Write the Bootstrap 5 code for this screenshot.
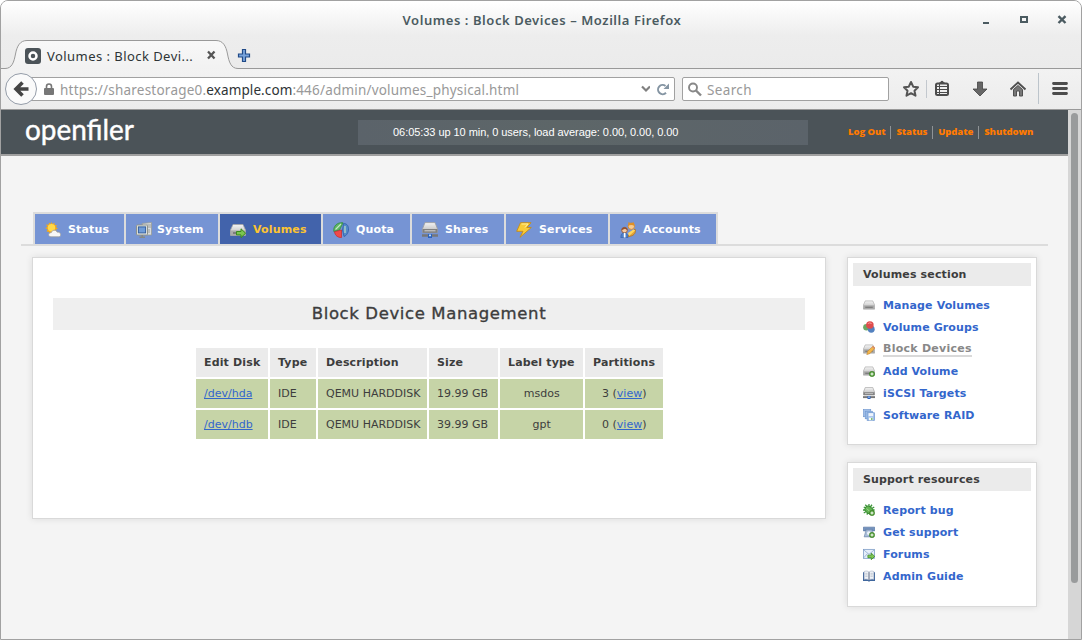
<!DOCTYPE html>
<html lang="en">
<head>
<meta charset="utf-8">
<title>Volumes : Block Devices</title>
<link rel="stylesheet" href="https://cdn.jsdelivr.net/npm/bootstrap@5.3.0/dist/css/bootstrap.min.css">
<style>
body{font:11px/16px "DejaVu Sans",sans-serif;color:#3d3d3d;background:#fff;overflow:hidden}
svg{display:block;flex:none}
.win{width:1082px;height:640px;border:1px solid #a1a1a1;border-radius:8px 8px 0 0;overflow:hidden;background:#f4f4f4}
.chrome-font{font-family:"Noto Sans","Open Sans",sans-serif}
.topbars{height:68px;background:linear-gradient(#fff,#ededed 35px,#ebebeb)}
.titlebar{height:38px}
.titlebar .caption{font-size:13px;font-weight:600;color:#4b5b61;letter-spacing:.56px;padding-left:2px}
.winbtns{right:14px;top:13px;gap:27px}
.tabstrip{height:30px}
.tabstrip .tabshape{left:0;top:0}
.tabtitle{font-size:13px;color:#2e3436;letter-spacing:.45px;width:164px;padding-left:6px}
.toolbar{height:41px;background:linear-gradient(#f2f2f2,#ececec);border-bottom:1px solid #999}
.field{height:24px;background:#fff;border:1px solid #a1a1a1;border-radius:2px;font-size:13.5px;color:#999}
.urlfield{width:655px;margin-left:19px}
.urlfield .lock{margin-left:23px;margin-right:6px}
.urltext{line-height:22px;padding-top:1px}
.searchfield{width:207px;margin-left:7px}
.searchtext{letter-spacing:.35px;margin-left:5px;padding-top:1px}
.host{color:#2e3436}
.u1{letter-spacing:.22px}.u2{letter-spacing:.1px}.u3{letter-spacing:.19px}
.backbtn{left:4px;top:4px}
.pagebody{width:1067px}
.apphead{height:46px;background:#4b5358;border-bottom:2px solid #a0a0a0}
.brandbox{width:357px;padding-left:23px}
.uptime{width:450px;height:25px;background:linear-gradient(90deg,#5b636a,#5d6668 45%,#5b636a);color:#fff;font:11px/25px "Liberation Sans",sans-serif;letter-spacing:-.055px;padding-left:35px}
.toplinks{margin-left:40px;font:800 9.5px/12px "Open Sans","Noto Sans",sans-serif}
.toplinks a{color:#ff7a00;text-decoration:none;letter-spacing:-.1px}
.toplinks i{width:1px;height:13px;background:#8e9396;margin:0 5px}
.menu{margin:56px 20px 0;height:34px;padding-left:12px;border-bottom:2px solid #dcdcdc}
.menu .tabs{border:2px solid #dcdcdc;border-bottom:0;height:32px;gap:2px;background:#dcdcdc}
.menu a{background:#7694d4;color:#fff;font-weight:700;text-decoration:none;padding:2px 0 0 10px;gap:7px;letter-spacing:.15px}
.menu a.on{background:#4263ab;color:#fdc431}
.menu a.near{gap:5px;letter-spacing:.15px}
.w1{width:89px}.w2{width:92px}.w3{width:101px}.w4{width:87px}.w5{width:102px}.w6{width:106px}
.panelbox{background:#fff;border:1px solid #d9d9d9;box-shadow:0 0 7px rgba(0,0,0,.1)}
.content{margin:11px 0 0 31px;gap:21px}
.mainpanel{width:794px;height:262px;padding:40px 20px 0}
.ptitle{height:32px;background:#efefef;font-size:16.5px;line-height:32px;letter-spacing:.62px;-webkit-text-stroke:.35px #3d3d3d;margin-bottom:16px}
.disks{border-collapse:separate;border-spacing:2px;table-layout:fixed;width:471px}
.disks th,.disks td{height:29px;padding:0 7px 0 8.5px;line-height:28px;white-space:nowrap}
.disks th{background:#ebebeb;letter-spacing:.15px}
.disks td{background:#c6d4a7}
.disks a{color:#36c}
.c1{width:72px}.c2{width:46px}.c3{width:109px}.c4{width:69px}.c5{width:83px}.c6{width:78px}
.side{width:190px;padding:5px}
.side-a{height:188px;margin-bottom:17px}
.side-b{height:145px}
.sidehead{height:23px;background:#ebebeb;line-height:24px;padding-left:10px;font-weight:700;letter-spacing:.15px;margin-bottom:8px}
.side li{height:22px;padding-left:10px;gap:8px}
.side a{color:#36c;font-weight:700;text-decoration:none;letter-spacing:.12px;padding-top:2px}
.side a.cur{color:#888;border-bottom:2px solid #d9d9d9;line-height:12px;letter-spacing:.25px}
.scroller{width:13px;background:#d6d6d6;padding:3px 3px 0}
.thumb{width:7px;height:470px;border-radius:4px;background:#999b9c}
</style>
<script src="https://cdn.jsdelivr.net/npm/bootstrap@5.3.0/dist/js/bootstrap.bundle.min.js"></script>
</head>
<body>
<svg width="0" height="0" class="position-absolute">
<defs>
<linearGradient id="gTab" x2="0" y2="1"><stop stop-color="#f8f8f8"/><stop offset="1" stop-color="#f1f1f1"/></linearGradient>
<linearGradient id="gDisk" x2="0" y2="1"><stop stop-color="#f4f4f4"/><stop offset="1" stop-color="#b4b4b4"/></linearGradient>
</defs>
<symbol id="disk" viewBox="0 0 16 16"><path d="M3 2.500h10l2.500 5.500v5.500H.5V8z" fill="url(#gDisk)" stroke="#a4a4a4" stroke-width=".8"/><path d="M.8 8.500h14.400v4.800H.8z" fill="#aaa"/><path d="M3 11h10" stroke="#6f6f6f" stroke-width="1.300"/></symbol>
<symbol id="plus" viewBox="0 0 16 16"><circle cx="12" cy="12" r="3.600" fill="#4f9b35" stroke="#36761f" stroke-width=".6"/><path d="M12 10v4M10 12h4" stroke="#fff" stroke-width="1.300"/></symbol>
<symbol id="arrow" viewBox="0 0 16 16"><path d="M6.500 9.500h4.500V6.800l4.600 4.400-4.600 4.400v-2.700H6.500z" fill="#7cc552" stroke="#3a8a1d" stroke-width="1"/></symbol>
<symbol id="net" viewBox="0 0 16 16"><path d="M3 .6h10l2.400 6v4H.6v-4z" fill="url(#gDisk)" stroke="#9a9a9a" stroke-width=".8"/><path d="M.7 7h14.600v3.800H.7z" fill="#808080"/><path d="M2.500 8.800h11" stroke="#ddd" stroke-width=".9"/><path d="M0 13.500h16" stroke="#777" stroke-width="2.600"/><path d="M6 12h4v4H6z" fill="#2c63bd"/><path d="M7 12.500h2v1.700H7z" fill="#bcd5f5"/></symbol>
<symbol id="weather" viewBox="0 0 16 16"><path d="M6.500 0l1 2 2-1.300.2 2.400 2.400.2L10.800 5l2 1.500-2 1.200 1 2-2.500.4-.8 2-2-1.300-2 1.300-.5-2.200-2.500-.5 1-2L.2 6l2.300-1.100L1 2.600l2.500.1L4 .5l1.800 1.400z" fill="#f3a81c"/><circle cx="6.500" cy="5.800" r="3.700" fill="#ffd84a"/><path d="M6 14.800c-3.500-.2-3-4.300.3-4.200C7 7.800 11 7.300 12 10.100c2.500-.2 3.700 1.200 3.700 2.600 0 1.600-1 2.100-2.400 2.100z" fill="#f7f7f7" stroke="#9d9d9d" stroke-width=".8"/></symbol>
<symbol id="pc" viewBox="0 0 16 16"><path d="M6 1.500L15.500.5v12.500H10z" fill="#d9dcdc" stroke="#989c98" stroke-width=".8"/><path d="M10.500 3H15M10.500 5H15M13 7v4" stroke="#8b9190" stroke-width=".8"/><rect x=".5" y="3" width="11" height="10" rx="1" fill="#e6e8e4" stroke="#8e938c"/><rect x="2.400" y="4.900" width="7.200" height="6" fill="#6f9cd8" stroke="#355f9e" stroke-width="1"/><path d="M3.500 15.200h5.500M6.200 13v2" stroke="#858985" stroke-width="1.600"/></symbol>
<symbol id="pie" viewBox="0 0 16 16"><path d="M10.500 1.500C14.500 1.500 15.700 4.500 15.500 8c-.2 3-2.500 6-4.500 6.500L9.500 8z" fill="#5388ca" stroke="#2d60a8" stroke-width=".8"/><path d="M10 .8L6.500 8 .8 9.500C0 4.500 4 0 10 .8z" fill="#5fb564" stroke="#2f8f3e" stroke-width=".8"/><path d="M1.500 9.700l7-1.700v7.500C5 15.700 2 13.500 1.500 9.700z" fill="#f04a4a" stroke="#c92828" stroke-width=".7"/><path d="M2.500 7.500L8 2M12 4v7" stroke="#c5e8c9" stroke-width="1.100"/></symbol>
<symbol id="bolt" viewBox="0 0 16 16"><path d="M4.500.7H15L10.800 5.500h4.500L4 15.300l3-6H.7z" fill="#f9cb38" stroke="#c78c15" stroke-width=".9"/><path d="M5.500 2H12L9 5.500" fill="none" stroke="#fff0a0"/></symbol>
<symbol id="users" viewBox="0 0 16 16"><path d="M7 15L15 7c1.500 3-1 6.500-4 7z" fill="#e3a33c" stroke="#b67518" stroke-width=".8"/><circle cx="11.300" cy="4.200" r="3.200" fill="#f6cb92" stroke="#d1822b" stroke-width=".8"/><path d="M8 4L8.500 0l2.300 1.300L13.800.2 14.700 4C12.500 2.600 10 2.600 8 4z" fill="#dd8f28"/><path d="M8 11l5.500-3.500 1.700 1L9 14z" fill="#ffd65b"/><circle cx="4.500" cy="8.200" r="2.800" fill="#f4c79d" stroke="#8e4c2b" stroke-width=".8"/><path d="M1.500 8.200c0-4 6-4 6.100 0L5 6.800z" fill="#94502e"/><path d="M.8 15.700c0-4 1.500-4.700 3.700-4.700s3.500 1.200 3.500 4.700z" fill="#4d7fca" stroke="#2c5a9f" stroke-width=".5"/><path d="M3.800 11h1.700v4.500H3.800z" fill="#fff"/></symbol>
<symbol id="balls" viewBox="0 0 16 16"><circle cx="4.600" cy="8.300" r="4.400" fill="#6ba765"/><circle cx="11" cy="11" r="4.600" fill="#5381bf"/><circle cx="9.200" cy="5.200" r="5" fill="#df4c4c"/><path d="M6.500 4c1-2 4-2 5 0" fill="none" stroke="#f5a0a0" stroke-width="1.300"/></symbol>
<symbol id="pencil" viewBox="0 0 16 16"><path d="M5 15.500l1.200-4.500L13.500 4 16.200 6.700l-7.200 7.500z" fill="#f3b64a" stroke="#b0762b" stroke-width=".6"/><path d="M13.500 4L16 6.500l-1.500 1.300L12 5.300z" fill="#d98a70"/></symbol>
<symbol id="raid" viewBox="0 0 16 16"><g fill="#a3c1ea" stroke="#6f97cf" stroke-width=".9"><rect x=".8" y=".8" width="9.500" height="9.500"/><rect x="3" y="3" width="9.500" height="10"/><rect x="5.500" y="5" width="10" height="10.300"/></g><path d="M7.500 5.500h6v4h-6z" fill="#eef4fc"/><path d="M8 11.500h5V15H8z" fill="#f8fbf1"/><path d="M11 12h1.500v2.500H11z" fill="#58a84a"/></symbol>
<symbol id="bug" viewBox="0 0 16 16"><path d="M1 4l4 2M3 1l4 4M8 0v5M12 1L9 5M15 4l-5 3M0 8h6M1 12l5-3M15.500 8H9M5 14l3-4" stroke="#3e963b" stroke-width="1.700"/><ellipse cx="8" cy="8" rx="6" ry="4.600" transform="rotate(40 8 8)" fill="#62b452" stroke="#31812d"/><path d="M5 6l5 5" stroke="#bce4a4"/></symbol>
<symbol id="phone" viewBox="0 0 16 16"><path d="M.5 1.500h15v5h-3v-2h-9v2h-3z" fill="#7594bf" stroke="#48699a" stroke-width=".8"/><path d="M4 5.500h8l2.500 9H1.500z" fill="#a9bdd7" stroke="#6480a6" stroke-width=".8"/><circle cx="8" cy="9.500" r="2.600" fill="#edf3fa"/></symbol>
<symbol id="mail" viewBox="0 0 16 16"><rect x=".6" y="1.800" width="14.800" height="12" fill="#e5eefa" stroke="#7899c4"/><path d="M1 2.500l7 6 7-6M1 13l5-5.500M15 13l-5-5.500" fill="none" stroke="#8aa7cd"/></symbol>
<symbol id="book" viewBox="0 0 16 16"><path d="M0 3h16v11.500H9.500L8 15.500l-1.500-1H0z" fill="#3f669d"/><path d="M1.500 2C4 1 6.500 1.200 8 2.700v10.500C6 12 4 12 1.500 12.500zM14.500 2C12 1 9.500 1.200 8 2.700v10.500c2-1.200 4-1.200 6.500-.7z" fill="#f0f3f8" stroke="#8f9bb0" stroke-width=".6"/><path d="M3 4.500h3M3 6.500h3M3 8.500h3M10 4.500h3M10 6.500h3M10 8.500h3" stroke="#a9b1bd" stroke-width=".8"/><path d="M8 3v10" stroke="#6c7788"/></symbol>
</svg>

<div class="win d-flex flex-column">
  <header class="topbars chrome-font flex-shrink-0">
    <div class="titlebar position-relative d-flex align-items-center justify-content-center">
      <span class="caption">Volumes : Block Devices – Mozilla Firefox</span>
      <div class="winbtns position-absolute d-flex">
        <svg width="11" height="12"><path d="M3 9h6" stroke="#4b5b61" stroke-width="2"/></svg>
        <svg width="11" height="12"><path d="M3 3h6v5H3z" fill="none" stroke="#4b5b61" stroke-width="2"/></svg>
        <svg width="11" height="12"><path d="M2.500 2.200l7 6.800M9.500 2.200L2.500 9" stroke="#4b5b61" stroke-width="2.400"/></svg>
      </div>
    </div>
    <div class="tabstrip position-relative">
      <svg class="tabshape position-absolute" width="1080" height="30"><path d="M-1 29.500H4C11 29.500 13 23 14.500 15 16 7 19 1.500 26 1.500H215c7 0 10 5.500 11.500 13.500S230 29.500 237 29.500H1082V32H-1z" fill="url(#gTab)" stroke="#999"/></svg>
      <div class="position-relative d-flex align-items-center h-100 ps-4 pt-1">
        <svg width="16" height="16"><rect width="16" height="16" rx="3" fill="#4b5358"/><circle cx="8" cy="8" r="3.500" fill="none" stroke="#fff" stroke-width="2.500"/></svg>
        <span class="tabtitle text-nowrap">Volumes : Block Devi...</span>
        <svg width="12" height="12"><path d="M3 1.500l6.500 7M9.500 1.500L3 8.500" stroke="#555" stroke-width="2.300"/></svg>
        <svg class="ms-3 ps-1" width="18" height="14"><path d="M5.500 .5h3V5h4v3h-4v4.500h-3V8h-4V5h4z" fill="#79a4dc" stroke="#204a87" stroke-width="1.200"/></svg>
      </div>
    </div>
  </header>

  <nav class="toolbar chrome-font position-relative d-flex align-items-center flex-shrink-0">
    <div class="urlfield field d-flex align-items-center">
      <svg class="lock" width="10" height="12"><path d="M2.500 6V3.500a2.500 2.500 0 015 0V6" fill="none" stroke="#777" stroke-width="1.600"/><rect y="5" width="10" height="7" rx="1" fill="#777"/></svg>
      <span class="urltext flex-grow-1 text-nowrap"><span class="u1">https://sharestorage0.</span><span class="host u2">example.com</span><span class="u3">:446/admin/volumes_physical.html</span></span>
      <svg width="11" height="8"><path d="M3 1.500l4 4 4-4" fill="none" stroke="#808080" stroke-width="2.200"/></svg>
      <svg class="mx-1" width="16" height="13"><path d="M12 9.800A4.600 4.600 0 1111.500 3" fill="none" stroke="#8595a3" stroke-width="2"/><path d="M15 .5v5.500H9.500z" fill="#8595a3"/></svg>
    </div>
    <div class="searchfield field d-flex align-items-center">
      <svg class="ms-1" width="15" height="15"><circle cx="6" cy="5.500" r="4" fill="none" stroke="#888" stroke-width="1.900"/><path d="M9 8.500l5 5" stroke="#888" stroke-width="2.400"/></svg>
      <span class="searchtext">Search</span>
    </div>
    <svg class="tools" width="190" height="40" fill="none">
      <path d="M22 13l2.200 4.700 4.800.6-3.500 3.400 1 5-4.500-2.500-4.500 2.500 1-5-3.500-3.400 4.800-.6z" stroke="#555" stroke-width="2" stroke-linejoin="round"/>
      <path d="M37.500 11v18" stroke="#c3c8ce"/>
      <rect x="47" y="14.500" width="12" height="11.500" rx="1.500" stroke="#4c4c4c" stroke-width="2"/><path d="M50 14.500l3-2.500 3 2.500" fill="#4c4c4c" stroke="#4c4c4c"/><path d="M48 17.500h11M48 20.500h11M48 23.500h11M50.500 15v11" stroke="#4c4c4c" stroke-width="1"/>
      <path d="M88.500 13h5v7H98l-7 7-7-7h4.500z" fill="#666" stroke="#444" stroke-width=".8"/>
      <path d="M121.500 20.500L129 13.500l7.500 7" stroke="#505050" stroke-width="2"/><path d="M124.500 20.500l4.500-4 4.500 4V27h-3v-5h-3v5h-3z" fill="#777" stroke="#505050" stroke-width="1"/>
      <path d="M149.500 4v31" stroke="#bcc4cb"/>
      <path d="M164.500 14.500h13M164.500 19.500h13M164.500 24.500h13" stroke="#4c4c4c" stroke-width="2.800" stroke-linecap="round"/>
    </svg>
    <svg class="backbtn position-absolute" width="33" height="33"><circle cx="16" cy="16" r="15.500" fill="#fafafa" stroke="#949ca8"/><path d="M17.500 9.500L11 16l6.500 6.500M11.500 16h12" fill="none" stroke="#444" stroke-width="3.600"/></svg>
  </nav>

  <div class="d-flex flex-grow-1 overflow-hidden">
    <div class="pagebody flex-shrink-0">
      <div class="apphead d-flex align-items-center">
        <div class="brandbox"><svg width="120" height="42"><text x="1" y="28.500" textLength="109" lengthAdjust="spacingAndGlyphs" font-family="Lato,sans-serif" font-size="28" fill="#fff" stroke="#fff" stroke-width=".4">openfiler</text></svg></div>
        <div class="uptime">06:05:33 up 10 min, 0 users, load average: 0.00, 0.00, 0.00</div>
        <div class="toplinks d-flex align-items-center text-nowrap"><a href="#">Log Out</a><i></i><a href="#">Status</a><i></i><a href="#">Update</a><i></i><a href="#">Shutdown</a></div>
      </div>

      <nav class="menu d-flex">
        <div class="tabs d-flex">
          <a href="#" class="w1 d-flex align-items-center"><svg width="16" height="16"><use href="#weather"/></svg>Status</a>
          <a href="#" class="w2 d-flex align-items-center near"><svg width="16" height="16"><use href="#pc"/></svg>System</a>
          <a href="#" class="w3 d-flex align-items-center on"><svg width="16" height="16"><use href="#disk"/><use href="#arrow"/></svg>Volumes</a>
          <a href="#" class="w4 d-flex align-items-center"><svg width="16" height="16"><use href="#pie"/></svg>Quota</a>
          <a href="#" class="w2 d-flex align-items-center"><svg width="16" height="16"><use href="#net"/></svg>Shares</a>
          <a href="#" class="w5 d-flex align-items-center"><svg width="16" height="16"><use href="#bolt"/></svg>Services</a>
          <a href="#" class="w6 d-flex align-items-center"><svg width="16" height="16"><use href="#users"/></svg>Accounts</a>
        </div>
      </nav>

      <div class="content d-flex align-items-start">
        <main class="panelbox mainpanel">
          <h1 class="ptitle text-center fw-normal">Block Device Management</h1>
          <table class="disks mx-auto">
            <colgroup><col class="c1"><col class="c2"><col class="c3"><col class="c4"><col class="c5"><col class="c6"></colgroup>
            <thead><tr><th>Edit Disk</th><th>Type</th><th>Description</th><th>Size</th><th>Label type</th><th>Partitions</th></tr></thead>
            <tbody>
              <tr><td><a href="#">/dev/hda</a></td><td>IDE</td><td>QEMU HARDDISK</td><td>19.99 GB</td><td class="text-center">msdos</td><td class="text-center">3 (<a href="#">view</a>)</td></tr>
              <tr><td><a href="#">/dev/hdb</a></td><td>IDE</td><td>QEMU HARDDISK</td><td>39.99 GB</td><td class="text-center">gpt</td><td class="text-center">0 (<a href="#">view</a>)</td></tr>
            </tbody>
          </table>
        </main>
        <aside>
          <section class="panelbox side side-a">
            <div class="sidehead">Volumes section</div>
            <ul class="list-unstyled mb-0">
              <li class="d-flex align-items-center"><svg width="12" height="12"><use href="#disk"/></svg><a href="#">Manage Volumes</a></li>
              <li class="d-flex align-items-center"><svg width="12" height="12"><use href="#balls"/></svg><a href="#">Volume Groups</a></li>
              <li class="d-flex align-items-center"><svg width="12" height="12"><use href="#disk"/><use href="#pencil"/></svg><a href="#" class="cur">Block Devices</a></li>
              <li class="d-flex align-items-center"><svg width="12" height="12"><use href="#disk"/><use href="#plus"/></svg><a href="#">Add Volume</a></li>
              <li class="d-flex align-items-center"><svg width="12" height="12"><use href="#net"/></svg><a href="#">iSCSI Targets</a></li>
              <li class="d-flex align-items-center"><svg width="12" height="12"><use href="#raid"/></svg><a href="#">Software RAID</a></li>
            </ul>
          </section>
          <section class="panelbox side side-b">
            <div class="sidehead">Support resources</div>
            <ul class="list-unstyled mb-0">
              <li class="d-flex align-items-center"><svg width="12" height="12"><use href="#bug"/><use href="#plus"/></svg><a href="#">Report bug</a></li>
              <li class="d-flex align-items-center"><svg width="12" height="12"><use href="#phone"/><use href="#plus"/></svg><a href="#">Get support</a></li>
              <li class="d-flex align-items-center"><svg width="12" height="12"><use href="#mail"/><use href="#arrow"/></svg><a href="#">Forums</a></li>
              <li class="d-flex align-items-center"><svg width="12" height="12"><use href="#book"/></svg><a href="#">Admin Guide</a></li>
            </ul>
          </section>
        </aside>
      </div>
    </div>
    <div class="scroller flex-shrink-0"><div class="thumb"></div></div>
  </div>
</div>
</body>
</html>
